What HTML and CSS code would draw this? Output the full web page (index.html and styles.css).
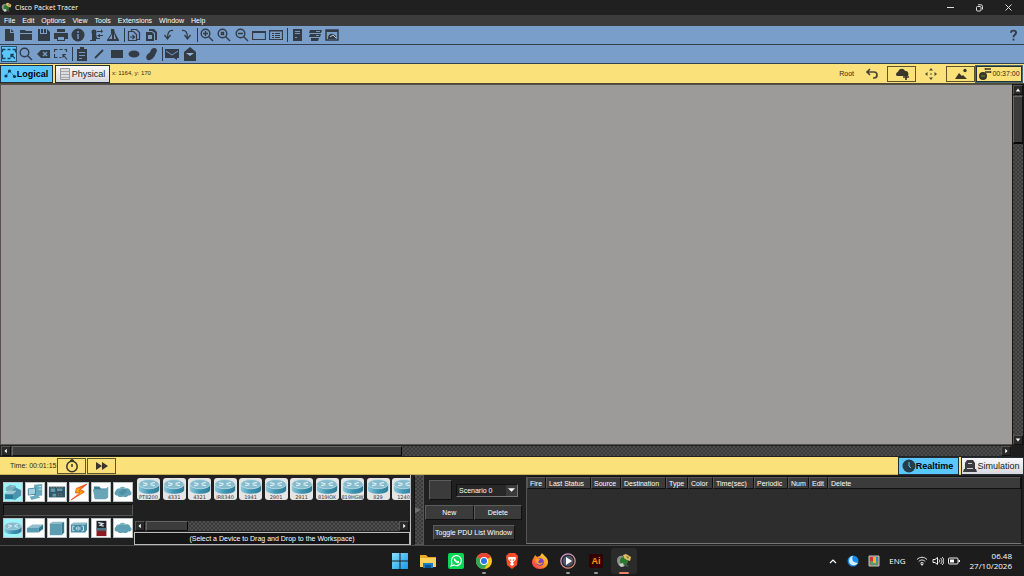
FILE: index.html
```html
<!DOCTYPE html>
<html lang="en">
<head>
<meta charset="utf-8">
<title>Cisco Packet Tracer</title>
<link rel="stylesheet" href="styles.css">
</head>
<body>
<svg class="defs" aria-hidden="true">
  <defs>
    <linearGradient id="g-side" x1="0" x2="1"><stop offset="0" stop-color="#8cc8dc"/><stop offset=".5" stop-color="#3c93b0"/><stop offset="1" stop-color="#2f7d99"/></linearGradient>
    <linearGradient id="g-bolt" x1="1" x2="0" y2="1"><stop offset="0" stop-color="#e01010"/><stop offset=".5" stop-color="#ffb000"/><stop offset="1" stop-color="#e81c08"/></linearGradient>
    <linearGradient id="g-win" x2="1" y2="1"><stop offset="0" stop-color="#8be0ff"/><stop offset="1" stop-color="#129be8"/></linearGradient>
    <linearGradient id="g-fox" x1="1" x2="0" y2="1"><stop offset="0" stop-color="#ffe14a"/><stop offset=".5" stop-color="#ff9022"/><stop offset="1" stop-color="#f5235e"/></linearGradient>
    <linearGradient id="g-ring" x1="0" x2="1" y2="1"><stop offset="0" stop-color="#c9a0e8"/><stop offset="1" stop-color="#f08a50"/></linearGradient>
    <symbol id="router" viewBox="0 0 20 14">
      <path d="M.5 5v5c0 5 19 5 19 0V5z" fill="url(#g-side)"/>
      <ellipse cx="10" cy="4.800" rx="9.500" ry="4.300" fill="#86bccd" stroke="#d6eaf0" stroke-width=".6"/>
      <path d="M4.500 3.500l4 1M15.500 6.300l-4-1M11.500 4.200l4-1M8.500 5.300l-4 1" stroke="#e6f5f8" stroke-width="1"/>
    </symbol>
    <symbol id="cloudy" viewBox="0 0 20 14">
      <path d="M4 11C0 11 0 7 2 6c0-3 3-3 4-3 2-3 6-2 7 0 3-1 5 1 5 3 3 2 1 5-2 5-2 2-4 2-6 1-2 1-5 1-6-1z" fill="#5f9fb3"/>
      <path d="M4 4.500c3-3 7-2 9-1" stroke="#9cc8d4" fill="none"/>
    </symbol>
    <symbol id="tracer" viewBox="0 0 16 16">
      <path d="M1 7c0-3 3-5 6-4l2 10-3 1C3 14 1 10 1 7z" fill="#8c918a"/>
      <circle cx="8" cy="8" r="4" fill="#2a7a2e"/>
      <path d="M7 2l3-1 5 3-1 4-3-1-3-2z" fill="#e2bf62"/>
      <path d="M10 3l3 1-1 2z" fill="#7a6a3a"/>
      <path d="M3 11l4-1 1 3-3 1z" fill="#c9cdc6"/>
      <path d="M9 10l4 3-2 1-3-2z" fill="#42594b"/>
    </symbol>
    <symbol id="arrow-up" viewBox="0 0 8 8"><path d="M4 2l3 4H1z" fill="#fff"/></symbol>
    <symbol id="arrow-down" viewBox="0 0 8 8"><path d="M4 6l3-4H1z" fill="#fff"/></symbol>
    <symbol id="arrow-left" viewBox="0 0 8 8"><path d="M2 4l3-3v6z" fill="#fff"/></symbol>
    <symbol id="arrow-right" viewBox="0 0 8 8"><path d="M6 4L3 1v6z" fill="#fff"/></symbol>
  </defs>
</svg>

<div class="app">
  <header class="titlebar">
    <svg class="title-logo"><use href="#tracer"/></svg>
    <h1 class="title">Cisco Packet Tracer</h1>
    <div class="window-controls">
      <button class="win-btn" aria-label="Minimize"><svg viewBox="0 0 8 8"><path d="M0 3.500h7" stroke="#ddd"/></svg></button>
      <button class="win-btn" aria-label="Restore"><svg viewBox="0 0 8 8" fill="none" stroke="#ddd"><rect x=".5" y="2.500" width="4.500" height="4.500" rx="1"/><path d="M2 .8h3Q6.500 .8 6.500 2.500v3"/></svg></button>
      <button class="win-btn" aria-label="Close"><svg viewBox="0 0 8 8"><path d="M.5 .5l6 6M6.500 .5l-6 6" stroke="#ddd"/></svg></button>
    </div>
  </header>

  <nav class="menubar">
    <button>File</button><button>Edit</button><button>Options</button><button>View</button><button>Tools</button><button>Extensions</button><button>Window</button><button>Help</button>
  </nav>

  <div class="toolbar">
    <div class="group g7">
      <button aria-label="New"><svg viewBox="0 0 14 14"><path d="M3 1h5v4h4v8H3zM9 1l3 3H9z"/></svg></button>
      <button aria-label="Open"><svg viewBox="0 0 14 14"><path d="M1 2h5l1 1h6v2H1zM1 6h12v6H1z"/></svg></button>
      <button aria-label="Save"><svg viewBox="0 0 14 14"><path d="M1 1h2v5h7V1l3 3v9H1zM7 1h2v4H7zM4 1h2v4H4z"/></svg></button>
      <button aria-label="Print"><svg viewBox="0 0 14 14"><path fill-rule="evenodd" d="M3 1h8v3H3zM0 5h14v6h-3v2H3v-2H0zM4 9v3h6V9z"/></svg></button>
      <button aria-label="Network information"><svg viewBox="0 0 14 14"><circle cx="7" cy="7" r="6.500"/><path d="M7 3v2M7 6v5" stroke="#7299c5" stroke-width="1.500"/></svg></button>
      <button aria-label="User profile"><svg viewBox="0 0 14 14"><circle cx="5" cy="4" r="2.500"/><path d="M3 6h4l1 4h3v1H7v2H1v-1h2zM8 3h4V1l2 2.500L12 5V4H8zM14 8h-3v1.500L8 7.500 11 6v1h3z"/></svg></button>
      <button aria-label="Activity wizard"><svg viewBox="0 0 14 14"><path fill-rule="evenodd" d="M5 1h3l1 4 4 7v1H1v-1l4-6zM6 6l-3 5h3zM8 5v6h2z"/></svg></button>
    </div>
    <span class="sep"></span>
    <div class="group g4">
      <button aria-label="Copy"><svg viewBox="0 0 14 14" fill="none" stroke="#333b44" stroke-width="1.200"><path d="M4.500 3.500V1.500h5l3 3v7H10"/><path d="M1.500 3.500h5l3 3v6h-8zM3 9h4M5.500 7l2 2-2 2"/></svg></button>
      <button aria-label="Paste"><svg viewBox="0 0 14 14"><path d="M5 1h5l3 3v8h-2V5L8 3H5z"/><path fill-rule="evenodd" d="M2 4h6l2 2v7H2zM4 7v4h4V7z"/></svg></button>
      <button aria-label="Undo"><svg viewBox="0 0 14 14" fill="none" stroke="#333b44" stroke-width="1.300"><path d="M11 2.500C7 2 5.500 5 5.500 10M2.500 7l3 4 3-4"/></svg></button>
      <button aria-label="Redo"><svg viewBox="0 0 14 14" fill="none" stroke="#333b44" stroke-width="1.300"><path d="M3 2.500c4-.5 5.500 2.500 5.500 7.500M11.500 7l-3 4-3-4"/></svg></button>
    </div>
    <span class="sep"></span>
    <div class="group g5">
      <button aria-label="Zoom in"><svg viewBox="0 0 14 14" fill="none" stroke="#333b44" stroke-width="1.400"><circle cx="5.500" cy="5.500" r="4.300"/><path d="M8.500 8.500l4.500 4.500M3 5.500h5M5.500 3v5"/></svg></button>
      <button aria-label="Zoom reset"><svg viewBox="0 0 14 14" fill="none" stroke="#333b44" stroke-width="1.400"><circle cx="5.500" cy="5.500" r="4.300"/><path d="M8.500 8.500l4.500 4.500"/><rect x="4.500" y="4.500" width="2" height="2"/></svg></button>
      <button aria-label="Zoom out"><svg viewBox="0 0 14 14" fill="none" stroke="#333b44" stroke-width="1.400"><circle cx="5.500" cy="5.500" r="4.300"/><path d="M8.500 8.500l4.500 4.500M3 5.500h5"/></svg></button>
      <button aria-label="Workspace"><svg viewBox="0 0 14 14" fill="none" stroke="#333b44" stroke-width="1.200"><path d="M.5 3.500h13v8H.5zM.5 4.500h13"/></svg></button>
      <button aria-label="List view"><svg viewBox="0 0 14 14" fill="none" stroke="#333b44" stroke-width="1.200"><path d="M.5 2.500h13v9H.5zM.5 3h13"/><path d="M3 5.500h2M6 5.500h5M3 7.500h2M6 7.500h5M3 9.500h2M6 9.500h5" stroke-width="1"/></svg></button>
    </div>
    <span class="sep"></span>
    <div class="group g3">
      <button aria-label="Command log"><svg viewBox="0 0 14 14"><path d="M3 1h9v12H3z"/><path d="M5 3.500h5M5 5.500h5M5 9.500h2" stroke="#7299c5"/></svg></button>
      <button aria-label="Custom devices"><svg viewBox="0 0 14 14"><path d="M2 2h12l-1 3H1zM2 6h11l-1 3H1zM3 10h8l-1 3H3z"/><path d="M8 3.500h4M8 7.500h3" stroke="#7299c5"/></svg></button>
      <button aria-label="Cluster"><svg viewBox="0 0 14 14"><path d="M1 2h12v10H1z" fill="none" stroke="#333b44" stroke-width="1.500"/><path d="M1 2h12v2H1zM3 9c1-3 3-4 5-3l3 2v3H3z"/><path d="M5 9l3-2 3 3" stroke="#c0c6cc" fill="none"/></svg></button>
    </div>
    <button class="help" aria-label="Help contents"><svg viewBox="0 0 10 14" fill="none" stroke="#333b44" stroke-width="2.200"><path d="M2 4.500C2 1 8 1 8 4.500 8 7 5 6.500 5 9.500M5 11.500v2"/></svg></button>
  </div>

  <div class="toolbar">
    <div class="group g4">
      <button class="selected" aria-label="Select"><svg viewBox="0 0 14 14" fill="none" stroke="#1c4357" stroke-width="1.300"><path d="M.5 5V2.500h3M5.500 2.500h3M10.500 2.500h3v3M.5 7.500v4h3M5.500 11.500h3M9 7.500l4 4M9 10.500v-3h3"/></svg></button>
      <button aria-label="Inspect"><svg viewBox="0 0 14 14" fill="none" stroke="#333b44" stroke-width="1.400"><circle cx="5.500" cy="5.500" r="4.300"/><path d="M8.500 8.500l4.500 4.500"/></svg></button>
      <button aria-label="Delete"><svg viewBox="0 0 14 14"><path d="M0 7l4-4h9v8H4z"/><path d="M6 5l4 4M10 5L6 9" stroke="#7299c5" stroke-width="1.500"/></svg></button>
      <button aria-label="Resize"><svg viewBox="0 0 14 14" fill="none" stroke="#333b44" stroke-width="1.200"><path d="M.5 5V2.500h3M5.500 2.500h3M10.500 2.500h2v2.500M.5 7v3.500h3M5.500 10.500h2M9 7.500l4 5M9 10.500v-3h3"/></svg></button>
    </div>
    <span class="sep"></span>
    <div class="group g5b">
      <button aria-label="Place note"><svg viewBox="0 0 14 14"><path d="M2 2h3V0h4v2h3v12H2z"/><path d="M4 5.500h6M4 8.500h6M4 11.500h3" stroke="#7299c5"/></svg></button>
      <button aria-label="Draw line"><svg viewBox="0 0 14 14"><path d="M3 11l8-8" stroke="#333b44" stroke-width="1.800"/></svg></button>
      <button aria-label="Draw rectangle"><svg viewBox="0 0 14 14"><path d="M1 3h12v8H1z"/></svg></button>
      <button aria-label="Draw ellipse"><svg viewBox="0 0 14 14"><ellipse cx="7" cy="7" rx="5.500" ry="3.500"/></svg></button>
      <button aria-label="Draw freeform"><svg viewBox="0 0 14 14"><path d="M7 3c3-4 8-1 5 3-1 2-1 3-3 5-3 4-9 2-6-3 2-2 3-2 4-5z"/></svg></button>
    </div>
    <span class="sep"></span>
    <div class="group g2">
      <button aria-label="Add simple PDU"><svg viewBox="0 0 14 14"><path d="M0 2h14v9h-2v2l-3-2H0z"/><path d="M1 4l6 4 6-4" fill="none" stroke="#7299c5"/></svg></button>
      <button aria-label="Add complex PDU"><svg viewBox="0 0 14 14"><path d="M7 0l6 5v9H1V5z"/><path d="M3 6h8L7 9z" fill="#93b5dc"/></svg></button>
    </div>
  </div>

  <div class="viewbar">
    <button class="tab tab-active"><svg viewBox="0 0 14 12" fill="#13394c"><circle cx="3" cy="8" r="1.600"/><circle cx="6.500" cy="3" r="1.600"/><circle cx="11.500" cy="8.500" r="1.600"/><path d="M3 8l3.500-5 5 5.500" stroke="#13394c" stroke-dasharray="1 1" fill="none"/></svg>Logical</button>
    <button class="tab tab-light"><svg viewBox="0 0 14 12"><path d="M2.500 .5h9v11h-9z" fill="#dcdce0" stroke="#999"/><path d="M3 3.500h8M3 6.500h8M3 9.500h8" stroke="#aaa"/></svg>Physical</button>
    <span class="coords">x: 1164, y: 170</span>
    <div class="view-actions">
      <span class="root">Root</span>
      <button class="plain" aria-label="Back"><svg viewBox="0 0 14 12" fill="none" stroke="#4a4738" stroke-width="1.700"><path d="M2 4h7c4 0 4 6 0 6H8M5 1L2 4l3 3"/></svg></button>
      <button class="boxed" aria-label="New cluster"><svg viewBox="0 0 14 12"><path d="M1 7c0-2 1-3 2-3 1-4 6-4 7-1 3 0 4 2 3 5H2z"/><path d="M11 6v6M8 9h6" stroke="#39362a" stroke-width="1.700"/></svg></button>
      <button class="plain" aria-label="Move object"><svg viewBox="0 0 14 12"><path d="M7 0l2 2.500H5zM7 12l2-2.500H5zM1 6l2.500-2v4zM13 6l-2.500-2v4z" fill="#4a4738"/><path d="M6 5h2v2H6z" fill="#a09868"/></svg></button>
      <button class="boxed" aria-label="Set background"><svg viewBox="0 0 14 12"><path d="M1 11l4-6 3 3 1-1 4 4z"/><circle cx="11" cy="2.500" r="1.700"/></svg></button>
      <button class="boxed clockbox"><svg viewBox="0 0 14 12"><circle cx="5" cy="8" r="4"/><path d="M7 1h6M7 4h6" stroke="#39362a" stroke-width="1.500"/><path d="M8 0L6 1l2 1M12 3l2 1-2 1"/><path d="M3 8h4" stroke="#8b8355"/></svg>00:37:00</button>
    </div>
  </div>

  <main class="workspace">
    <section class="canvas" aria-label="Logical workspace"></section>
    <div class="vscroll"><button class="sb-arrow" aria-label="Scroll up"><svg><use href="#arrow-up"/></svg></button><div class="vthumb"></div><button class="sb-arrow end" aria-label="Scroll down"><svg><use href="#arrow-down"/></svg></button></div>
    <div class="hscroll"><button class="sb-arrow" aria-label="Scroll left"><svg><use href="#arrow-left"/></svg></button><div class="hthumb"></div><button class="sb-arrow end" aria-label="Scroll right"><svg><use href="#arrow-right"/></svg></button></div>
  </main>

  <div class="timebar">
    <span class="time">Time: 00:01:15</span>
    <button class="boxed" aria-label="Power cycle devices"><svg viewBox="0 0 14 14" fill="none" stroke="#39362a" stroke-width="1.500"><circle cx="7" cy="7.500" r="5.200"/><path d="M7 0v3M5 1.500h4M7 5v3"/></svg></button>
    <button class="boxed" aria-label="Fast forward time"><svg viewBox="0 0 14 12"><path d="M1 2l6 4-6 4zM7 2l6 4-6 4z"/></svg></button>
    <div class="modes">
      <button class="tab tab-active"><svg viewBox="0 0 14 14"><circle cx="7" cy="7" r="6.500" fill="#263c49"/><path d="M7 3v4l2 2" fill="none" stroke="#5ac8ff"/></svg>Realtime</button>
      <button class="tab tab-light"><svg viewBox="0 0 14 14" fill="#3a3a3f"><path d="M4 1h6l2 3v6h1l1 3H0l1-3h1V4z"/><path d="M5 4.500h4M4 9.500h6" stroke="#ccc"/></svg>Simulation</button>
    </div>
  </div>

  <section class="dock">
    <div class="categories">
      <div class="cat-row">
        <button class="cat on" aria-label="Network devices"><svg viewBox="0 0 20 20"><path d="M2 5l5-3 6 1 1 6H2z" fill="#79aebc"/><path d="M7 10l6-5 6 3v6l-7 5-5-2z" fill="#4a94ad"/><path d="M1 12h9v6H1z" fill="#287c99"/><path d="M1 12l4-3h8l-3 3zM7 4l5-1" fill="#a1cbd4" stroke="#a1cbd4"/></svg></button>
        <button class="cat" aria-label="End devices"><svg viewBox="0 0 20 20"><path d="M9 2l9-1v13l-9 1z" fill="#6aaabd"/><path d="M2 6l9-1v8l-9 1z" fill="#3d8aa4"/><path d="M3 7l7-1v6l-7 1z" fill="#a4d0dc"/><path d="M4 15l9-1 3 2-10 3z" fill="#6aaabd"/><path d="M14 4h3M14 7h3" stroke="#cce5ec"/></svg></button>
        <button class="cat" aria-label="Components"><svg viewBox="0 0 20 20"><path d="M1 4h18v12H1z" fill="#31586a"/><path d="M3 6h5v4H3zM10 6h6v3h-6zM5 12h4v3H5z" fill="#6797a6"/><path d="M3 5h14M11 12h6M11 14h5" stroke="#b18268" stroke-dasharray="1 2"/></svg></button>
        <button class="cat" aria-label="Connections"><svg viewBox="0 0 20 20"><path d="M19 1L7 6l-1 5 5 0-10 8 15-9-2-2-4 1z" fill="url(#g-bolt)" stroke="#e8340c" stroke-width=".7"/></svg></button>
        <button class="cat" aria-label="Miscellaneous"><svg viewBox="0 0 20 20"><path d="M2 4h6l2 2h8l-1 10H3z" fill="#3d7d92"/><path d="M1 7l14 0 3-3v12l-3 2H3z" fill="#69a4b7"/></svg></button>
        <button class="cat" aria-label="Multiuser connection"><svg viewBox="0 0 20 20"><use href="#cloudy" y="3" width="20" height="14"/><path d="M6 10h8M9 8h5M7 12h4" stroke="#3b8097"/></svg></button>
      </div>
      <div class="cat-label"></div>
      <div class="cat-row">
        <button class="cat on" aria-label="Routers"><svg viewBox="0 0 20 20"><use href="#router" y="3" width="20" height="14"/></svg></button>
        <button class="cat" aria-label="Switches"><svg viewBox="0 0 20 20"><path d="M1 10l6-4h12l-5 4z" fill="#8ebdcb"/><path d="M1 10h13v5H1z" fill="#599bb0"/><path d="M14 10l5-4v5l-5 4z" fill="#2f7690"/></svg></button>
        <button class="cat" aria-label="Hubs"><svg viewBox="0 0 20 20"><path d="M2 5l3-2h13l-3 2z" fill="#8cbcca"/><path d="M2 5h13v13H2z" fill="#5c9db1"/><path d="M15 5l3-2v12l-3 3z" fill="#35788f"/></svg></button>
        <button class="cat" aria-label="Wireless devices"><svg viewBox="0 0 20 20"><path d="M1 6l3-2h15l-2 2z" fill="#8cbcca"/><path d="M1 6h16v9H1zM17 6l2-2v8l-2 3z" fill="#438ba4"/><path d="M5 8H3v5h2M7 9v3M9 8v5M11 9v3M13 8h2v5h-2" fill="none" stroke="#dcecef"/></svg></button>
        <button class="cat" aria-label="Security"><svg viewBox="0 0 20 20"><path d="M5 2h11v8H5z" fill="#23252b"/><path d="M7 4l5 1-3 2 4 1" fill="none" stroke="#d8e7ee" stroke-width="1.500"/><path d="M5 10h11v9H5z" fill="#881c22"/><path d="M5 10h11v3H5z" fill="#4c7383"/></svg></button>
        <button class="cat" aria-label="WAN emulation"><svg viewBox="0 0 20 20"><use href="#cloudy" y="3" width="20" height="14"/></svg></button>
      </div>
    </div>

    <div class="devices">
      <div class="device-view">
        <div class="device-strip">
          <button class="device"><svg><use href="#router"/></svg>PT8200</button>
          <button class="device"><svg><use href="#router"/></svg>4331</button>
          <button class="device"><svg><use href="#router"/></svg>4321</button>
          <button class="device"><svg><use href="#router"/></svg>IR8340</button>
          <button class="device"><svg><use href="#router"/></svg>1941</button>
          <button class="device"><svg><use href="#router"/></svg>2901</button>
          <button class="device"><svg><use href="#router"/></svg>2911</button>
          <button class="device"><svg><use href="#router"/></svg>819IOX</button>
          <button class="device"><svg><use href="#router"/></svg>819HGW</button>
          <button class="device"><svg><use href="#router"/></svg>829</button>
          <button class="device"><svg><use href="#router"/></svg>1240</button>
        </div>
      </div>
      <div class="hscroll small"><button class="sb-arrow" aria-label="Scroll left"><svg><use href="#arrow-left"/></svg></button><div class="hthumb"></div><button class="sb-arrow end" aria-label="Scroll right"><svg><use href="#arrow-right"/></svg></button></div>
      <div class="hint">(Select a Device to Drag and Drop to the Workspace)</div>
    </div>

    <div class="splitter"><svg viewBox="0 0 6 8"><path d="M0 1l6 3-6 3z" fill="#707070"/></svg></div>

    <div class="scenario">
      <div class="scenario-row">
        <button class="btn swatch" aria-label="Scenario description"></button>
        <div class="select-wrap"><select class="select" aria-label="Scenario"><option>Scenario 0</option></select><span class="select-arrow"><svg viewBox="0 0 8 6"><path d="M0 1h8L4 5z" fill="#fff"/></svg></span></div>
      </div>
      <div class="scenario-pair"><button class="btn">New</button><button class="btn">Delete</button></div>
      <button class="btn toggle">Toggle PDU List Window</button>
    </div>

    <div class="pdu">
      <table class="pdu-table">
        <colgroup><col class="c19"><col class="c45"><col class="c30"><col class="c45"><col class="c22"><col class="c25"><col class="c41"><col class="c34"><col class="c21"><col class="c19"><col></colgroup>
        <thead><tr><th>Fire</th><th>Last Status</th><th>Source</th><th>Destination</th><th>Type</th><th>Color</th><th>Time(sec)</th><th>Periodic</th><th>Num</th><th>Edit</th><th>Delete</th></tr></thead>
      </table>
    </div>
  </section>

  <footer class="taskbar">
    <div class="apps">
      <button class="app-btn" aria-label="Start"><svg viewBox="0 0 16 16"><path d="M0 0h7.500v7.500H0zM8.500 0H16v7.500H8.500zM0 8.500h7.500V16H0zM8.500 8.500H16V16H8.500z" fill="url(#g-win)"/></svg></button>
      <button class="app-btn" aria-label="File Explorer"><svg viewBox="0 0 16 16"><path d="M0 2h6l2 2h8v10H0z" fill="#e9a62b"/><path d="M0 5h16v9H0z" fill="#ffd25c"/><path d="M3 10h10v5H3z" fill="#197cc6"/><path d="M5 12h6v3H5z" fill="#075493"/></svg></button>
      <button class="app-btn" aria-label="WhatsApp"><svg viewBox="0 0 16 16"><rect width="16" height="16" rx="2" fill="#04d754"/><path d="M3 13l1-3a5 5 0 1 1 2 2z" fill="none" stroke="#fff" stroke-width="1.200"/><path d="M6 5c-1 3 3 6 5 5l0-2-2 0-2-2z" fill="#fff"/></svg></button>
      <button class="app-btn running" aria-label="Chrome"><svg viewBox="0 0 16 16"><circle cx="8" cy="8" r="8" fill="#fbc51c"/><path d="M8 8L1 4a8 8 0 0 1 14 0z" fill="#e94434"/><path d="M1 4a8 8 0 0 0 7 12l4-6-4-2z" fill="#30a753"/><circle cx="8" cy="8" r="4" fill="#fff"/><circle cx="8" cy="8" r="3" fill="#2874e8"/></svg></button>
      <button class="app-btn" aria-label="Brave"><svg viewBox="0 0 16 16"><path d="M5 0h6l3 3-1 9-5 4-5-4L2 3z" fill="#fb4d2c"/><path fill-rule="evenodd" d="M4.500 4h7l.5 2-3 3.500 1 2-2 1.500-2-1.500 1-2L4 6zM5.500 6l2 1-1 1zM10.500 6l-2 1 1 1z" fill="#fff"/></svg></button>
      <button class="app-btn" aria-label="Firefox"><svg viewBox="0 0 16 16"><path d="M3 2l2 2 3-1 2-3c1 2 6 4 6 9 0 4-3 7-8 7s-8-3-8-7c0-3 2-4 3-7z" fill="url(#g-fox)"/><circle cx="8" cy="9" r="3.800" fill="#7742c6"/><path d="M3 6l5 0-2 3c2 2 4 1 5 0 0 3-6 4-7 0z" fill="#ffa126"/></svg></button>
      <button class="app-btn running" aria-label="Media Player"><svg viewBox="0 0 16 16"><circle cx="8" cy="8" r="7.200" fill="#252a35" stroke="url(#g-ring)" stroke-width="1.200"/><circle cx="8" cy="8" r="5.300" fill="#4d5360"/><path d="M6 4l6 4-6 4z" fill="#fff"/></svg></button>
      <button class="app-btn running" aria-label="Illustrator"><span class="ai">Ai</span></button>
      <button class="app-btn current" aria-label="Packet Tracer"><svg><use href="#tracer"/></svg></button>
    </div>
    <div class="tray">
      <svg class="t-chev" viewBox="0 0 8 8"><path d="M1 6l3-3 3 3" fill="none" stroke="#fff" stroke-width="1.200"/></svg>
      <svg class="t-icon" viewBox="0 0 12 12"><circle cx="6" cy="6" r="5.500" fill="#188bea"/><path d="M6 1c-2 4 0 7 5 7-4 5-9 1-9-2 0-3 2-5 4-5z" fill="#d5efff"/></svg>
      <svg class="t-icon" viewBox="0 0 12 12"><path d="M1 1h10v10H1z" fill="#8a8071" stroke="#c7c0b2"/><path d="M2 2h3v4H2z" fill="#c7352b"/><path d="M5 2h3v6H5z" fill="#f1b726"/><path d="M8 2h2v4H8z" fill="#258dd0"/><path d="M3 7h2v3H3zM8 7h2v3H8z" fill="#45a361"/></svg>
      <span class="lang">ENG</span>
      <svg class="t-icon" viewBox="0 0 12 12" fill="none" stroke="#eee"><path d="M1 4.500c3-3 7-3 10 0M2.700 6.500c2-2 4.600-2 6.600 0M4.300 8.300c1-1 2.400-1 3.400 0"/><circle cx="6" cy="9.500" r=".7" fill="#eee"/></svg>
      <svg class="t-icon" viewBox="0 0 12 12" fill="none" stroke="#eee"><path d="M1 4.500h2l2.500-2v7L3 7.500H1zM7 4.500c1 1 1 2 0 3M8.500 3c2 2 2 4 0 6M10 2c2.500 2 2.500 6 0 8"/></svg>
      <svg class="t-icon" viewBox="0 0 12 12"><rect x=".5" y="3" width="9.500" height="6" rx="1" fill="none" stroke="#eee"/><path d="M2 4.500h4v3H2zM10.500 5h1.500v2h-1.500z" fill="#fff"/></svg>
      <div class="clock"><span>06.48</span><span>27/10/2026</span></div>
    </div>
  </footer>
</div>
</body>
</html>
```

FILE: styles.css
```css
:root {
  --dark: #1d1d1d;
  --panel: #3b3b3b;
  --ink: #333b44;
  --blue: #789ec9;
  --yellow: #fae179;
  --sky: #5ac8ff;
  --check: repeating-conic-gradient(#3a3a3a 0 25%, #4d4d4d 0 50%) 0 0 / 4px 4px;
}
* { box-sizing: border-box; }
body { margin: 0; background: var(--dark); color: #fff; font: 7px/9px "Liberation Sans", Arial, sans-serif; }
button { margin: 0; padding: 0; border: 0; background: none; color: inherit; font: inherit; display: flex; align-items: center; justify-content: center; }
svg { display: block; flex: none; }
.defs { position: absolute; width: 0; height: 0; }
.app { display: flex; flex-direction: column; height: 100vh; overflow: hidden; }

.titlebar { display: flex; align-items: center; height: 15px; flex: none; padding-left: 1px; background: #202020; }
.title-logo { width: 11px; height: 11px; }
.title { margin: 0 0 0 3px; font: 7px/12px "Open Sans", "Noto Sans", sans-serif; }
.window-controls { display: flex; margin-left: auto; padding-right: 1px; }
.win-btn { width: 29px; height: 13px; }
.win-btn svg { width: 8px; height: 8px; }

.menubar { display: flex; gap: 7px; height: 11px; flex: none; padding-left: 4px; background: #3c3c3c; align-items: center; }

.toolbar { display: flex; align-items: center; height: 19px; flex: none; padding-left: 2px; background: var(--blue); border-bottom: 1px solid #34404d; }
.toolbar svg { width: 14px; height: 14px; fill: var(--ink); }
.toolbar svg[fill="none"] { fill: none; }
.group { display: flex; justify-content: space-between; }
.group button { width: 14px; height: 16px; }
.group .selected { background: var(--sky); box-shadow: 0 0 0 1px #28536d; height: 14px; align-self: center; }
.g7 { width: 118px; }
.g4 { width: 66px; }
.g5 { width: 83px; }
.g5b { width: 83px; }
.g3 { width: 49px; }
.g2 { width: 32px; }
.sep { width: 1px; height: 14px; margin: 0 2px 0 4px; background: #2b3b4d; }
.help { margin-left: auto; margin-right: 6px; }
.toolbar .help svg { width: 9px; height: 12px; fill: none; }

.viewbar { display: flex; align-items: center; height: 20px; flex: none; background: var(--yellow); color: #2f2b1b; border-bottom: 1px solid #504a32; }
.tab { height: 18px; padding: 0 3px 0 1px; border: 1px solid #222f38; color: #191c20; font-size: 9px; line-height: 12px; }
.tab svg { width: 14px; height: 12px; }
.tab-active { background: var(--sky); color: #000; font-weight: bold; }
.tab-light { background: linear-gradient(#f8f8fb, #d8d8df); margin-left: 2px; }
.viewbar .tab { flex: none; }
.viewbar .tab-active { width: 53px; }
.viewbar .tab-light { width: 55px; }
.coords { margin-left: 2px; font-size: 6px; }
.view-actions { display: flex; align-items: center; margin-left: auto; padding-right: 2px; }
.root { margin-right: 3px; }
.plain { width: 30px; height: 16px; }
.boxed { width: 29px; height: 16px; border: 1px solid #5e552f; color: #2f2b1b; }
.boxed svg, .plain svg { width: 14px; height: 12px; fill: #39362a; }
.plain svg[fill="none"], .boxed svg[fill="none"] { fill: none; }
.view-actions .clockbox { width: 46px; margin-left: 1px; border-color: #1f3338; outline: 1px solid #456a75; }

.workspace { flex: 1; min-height: 0; display: grid; grid-template: minmax(0, 1fr) 12px / minmax(0, 1fr) 12px; background: var(--dark); }
.canvas { background: #9c9b99; border: 1px solid #55524e; border-right: 0; }
.vscroll { display: flex; flex-direction: column; background: var(--check); border: 1px solid #151515; border-width: 1px 1px 0; }
.hscroll { display: flex; background: var(--check); border: 1px solid #222; }
.sb-arrow { flex: none; width: 10px; height: 10px; background: #292929; border: 1px solid #555; border-right-color: #111; border-bottom-color: #111; }
.sb-arrow svg { width: 6px; height: 6px; }
.sb-arrow.end { margin-left: auto; }
.vscroll .end { margin: auto 0 0; }
.vthumb { height: 48px; margin-top: 1px; background: var(--panel); border: 1px solid #666; border-right-color: #111; border-bottom: 2px solid #080808; }
.hthumb { width: 390px; margin-left: 1px; background: #3c3c3c; border: 1px solid #656565; border-right-color: #080808; border-bottom-color: #111; }

.timebar { display: flex; align-items: center; height: 18px; flex: none; background: var(--yellow); color: #2f2b1b; padding-left: 10px; border-bottom: 1px solid #c7b25b; }
.time { margin-right: 1px; }
.timebar .boxed { margin-right: 1px; }
.timebar .boxed svg { height: 14px; }
.modes { display: flex; margin-left: auto; }
.modes .tab svg { height: 14px; }
.modes .tab-active { width: 61px; }
.modes .tab-light { width: 63px; }

.dock { display: flex; height: 71px; flex: none; background: #202020; border-bottom: 1px solid #4b4b4b; }
.categories { width: 134px; padding: 7px 1px 0 3px; flex: none; }
.cat-row { display: flex; gap: 2px; }
.cat { width: 20px; height: 20px; background: #fff; border: 1px solid #b8c2c5; }
.cat svg { width: 18px; height: 18px; }
.cat.on { background: #9af5fc; }
.cat-label { height: 12px; margin: 2px 0; background: #2b2b2b; border: 1px solid #0b0b0b; border-right-color: #555; border-bottom-color: #555; }
.devices { display: flex; flex-direction: column; width: 277px; flex: none; border-right: 1px solid #bbb; }
.device-view { flex: 1; overflow: hidden; padding: 3px 0 0 3px; }
.device-strip { display: flex; justify-content: space-between; width: 278px; }
.device { flex-direction: column; width: 23px; height: 22px; flex: none; justify-content: flex-start; background: #e5e5e5; border-radius: 3px; color: #333; font: 5px/6px "DejaVu Sans", sans-serif; }
.device svg { width: 22px; height: 15px; margin-top: 1px; }
.hscroll.small { height: 12px; }
.small .hthumb { width: 42px; }
.hint { height: 13px; line-height: 11px; border: 1px solid #bbb; background: #151515; text-align: center; }
.splitter { width: 10px; flex: none; margin-left: 3px; background: var(--check); border: 1px solid #555; border-left-color: #111; display: flex; align-items: center; }
.splitter svg { width: 6px; height: 8px; }
.scenario { width: 99px; flex: none; padding: 5px 1px 0; display: flex; flex-direction: column; align-items: center; gap: 5px; }
.scenario-row { display: flex; align-items: center; gap: 4px; height: 20px; }
.btn { height: 15px; background: var(--panel); border: 1px solid #5c5c5c; border-right-color: #111; border-bottom-color: #111; }
.swatch { width: 23px; height: 20px; }
.select-wrap { position: relative; width: 62px; height: 13px; }
.select { width: 100%; height: 100%; appearance: none; padding: 0 2px; border: 1px solid #111; border-right-color: #777; border-bottom-color: #777; border-radius: 0; background: #282828; color: #fff; font: inherit; }
.select-arrow { position: absolute; right: 1px; top: 1px; width: 11px; height: 11px; background: var(--panel); display: flex; align-items: center; justify-content: center; pointer-events: none; }
.select-arrow svg { width: 7px; height: 6px; }
.scenario-pair { display: flex; width: 100%; }
.scenario-pair .btn { flex: 1; }
.toggle { width: 82px; }
.pdu { flex: 1; min-width: 0; margin: 1px 2px 1px 3px; background: #2d2d2d; border: 1px solid #111; border-left-color: #555; border-bottom-color: #777; }
.pdu-table { width: 100%; table-layout: fixed; border-collapse: separate; border-spacing: 0; }
.pdu-table th { height: 12px; padding: 0 0 0 2px; line-height: 9px; font-weight: normal; text-align: left; white-space: nowrap; background: var(--panel); border: 1px solid #575757; border-right-color: #111; border-bottom-color: #111; }
.c19 { width: 19px; }
.c21 { width: 21px; }
.c22 { width: 22px; }
.c25 { width: 25px; }
.c30 { width: 30px; }
.c34 { width: 34px; }
.c41 { width: 41px; }
.c45 { width: 45px; }

.taskbar { display: grid; grid-template-columns: 1fr auto 1fr; height: 30px; flex: none; background: #1c1c1c; }
.apps { grid-column: 2; display: flex; align-items: center; gap: 2px; }
.app-btn { position: relative; width: 26px; height: 26px; border-radius: 3px; }
.app-btn svg { width: 16px; height: 16px; }
.running::after, .current::after { content: ""; position: absolute; left: 50%; bottom: 0; width: 4px; height: 2px; margin-left: -2px; border-radius: 1px; background: #999; }
.current { background: #2b2b2b; }
.current::after { width: 10px; margin-left: -5px; background: #f0806b; }
.ai { width: 14px; height: 14px; border-radius: 2px; background: #300; color: #ff9a00; font: bold 9px/14px "Liberation Sans", sans-serif; }
.tray { display: flex; align-items: center; justify-content: flex-end; padding-right: 12px; font: 7px/10px "DejaVu Sans", "Noto Sans", sans-serif; }
.tray { font: 8px/10px "Open Sans", "Noto Sans", sans-serif; }
.t-chev { width: 8px; height: 8px; margin-right: 10px; }
.t-icon { width: 12px; height: 12px; margin-right: 4px; }
.t-icon:nth-of-type(2), .t-icon:nth-of-type(3) { margin-right: 9px; }
.lang { margin-right: 10px; }
.clock { display: flex; flex-direction: column; align-items: flex-end; margin-left: 6px; }
```
